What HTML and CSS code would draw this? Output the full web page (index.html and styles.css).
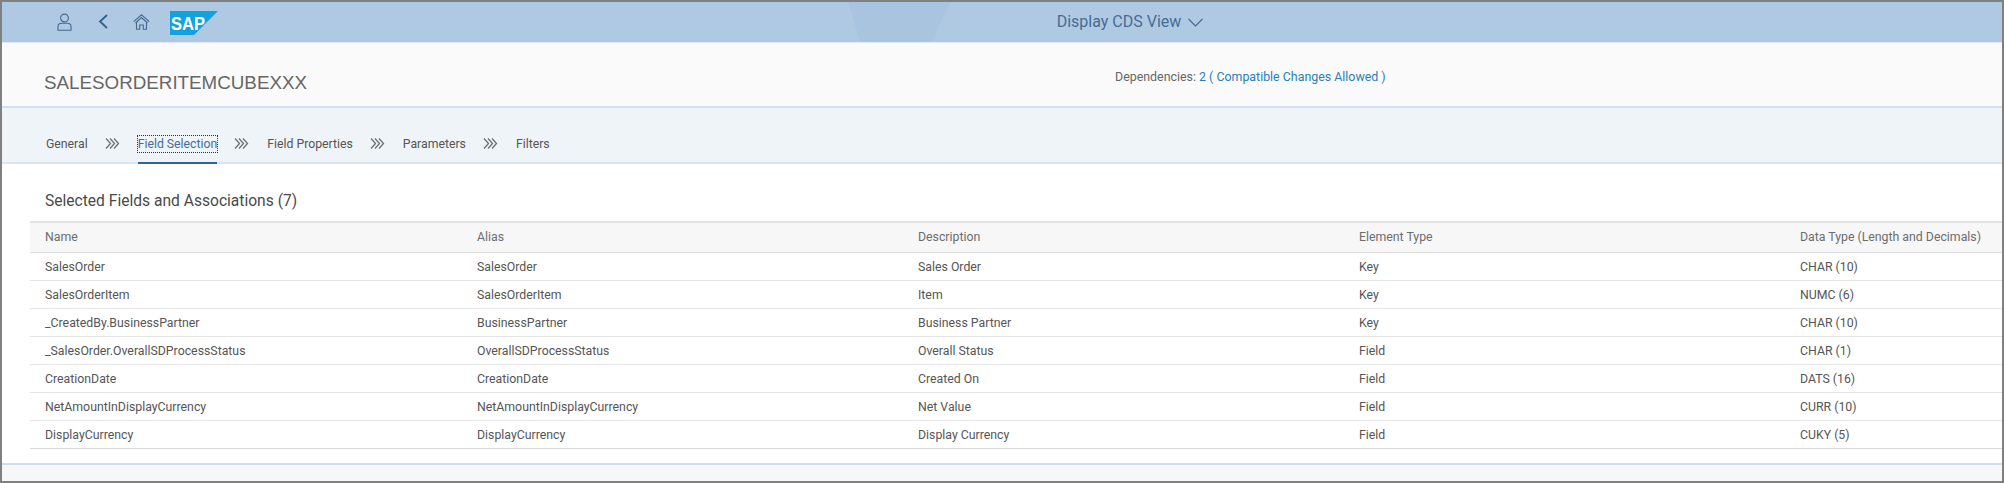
FILE: index.html
```html
<!DOCTYPE html>
<html>
<head>
  <title>Display CDS View</title>
  <link rel="stylesheet" href="styles.css">
</head>
<body>
  <div class="frame">
    <div class="shell">
      <div class="shell-shape"></div>
      <div class="shell-left">
        <svg class="icon-user" width="15" height="18" viewBox="0 0 15 18"><circle cx="7.500" cy="5" r="3.900"/><path d="M1 17.200v-3.400c0-2 1.500-3.600 3.500-3.600h6c2 0 3.500 1.600 3.500 3.600v3.400z"/></svg>
        <svg class="icon-back" width="11" height="15" viewBox="0 0 11 15"><path d="M9 1L2 7.500L9 14"/></svg>
        <svg class="icon-home" width="17" height="16" viewBox="0 0 17 16"><path d="M.7 7.600L8.500 .8l7.800 6.800"/><path d="M2.500 9L8.500 3.600L14.500 9"/><path d="M3.500 8.500v6.800h3.200v-4.300h3.600v4.300h3.200V8.500"/></svg>
        <svg class="logo" width="48" height="24" viewBox="0 0 48 24">
          <polygon points="0,0 48,0 24,24 0,24" fill="#12a3df"/>
          <text x="1" y="19" class="logo-text" textLength="34" lengthAdjust="spacingAndGlyphs">SAP</text>
        </svg>
      </div>
      <div class="shell-title">
        <span>Display CDS View</span>
        <svg width="15" height="9" viewBox="0 0 15 9"><path d="M.5 1l7 7l7-7"/></svg>
      </div>
    </div>

    <div class="objhead">
      <h1>SALESORDERITEMCUBEXXX</h1>
      <div class="deps">Dependencies: <a>2 ( Compatible Changes Allowed )</a></div>
    </div>

    <div class="nav">
      <a class="step">General</a>
      <svg class="chev" width="15" height="11" viewBox="0 0 15 11"><path d="M1 .5l4.500 5l-4.500 5M5 .5l4.500 5l-4.500 5M9 .5l4.500 5l-4.500 5"/></svg>
      <a class="step active"><span>Field Selection</span></a>
      <svg class="chev" width="15" height="11" viewBox="0 0 15 11"><path d="M1 .5l4.500 5l-4.500 5M5 .5l4.500 5l-4.500 5M9 .5l4.500 5l-4.500 5"/></svg>
      <a class="step">Field Properties</a>
      <svg class="chev" width="15" height="11" viewBox="0 0 15 11"><path d="M1 .5l4.500 5l-4.500 5M5 .5l4.500 5l-4.500 5M9 .5l4.500 5l-4.500 5"/></svg>
      <a class="step">Parameters</a>
      <svg class="chev" width="15" height="11" viewBox="0 0 15 11"><path d="M1 .5l4.500 5l-4.500 5M5 .5l4.500 5l-4.500 5M9 .5l4.500 5l-4.500 5"/></svg>
      <a class="step">Filters</a>
    </div>

    <div class="content">
      <h2>Selected Fields and Associations (7)</h2>
      <table class="fields">
        <colgroup>
          <col class="col-name"><col class="col-rest"><col class="col-rest"><col class="col-rest"><col>
        </colgroup>
        <thead>
          <tr><th>Name</th><th>Alias</th><th>Description</th><th>Element Type</th><th>Data Type (Length and Decimals)</th></tr>
        </thead>
        <tbody>
          <tr><td>SalesOrder</td><td>SalesOrder</td><td>Sales Order</td><td>Key</td><td>CHAR (10)</td></tr>
          <tr><td>SalesOrderItem</td><td>SalesOrderItem</td><td>Item</td><td>Key</td><td>NUMC (6)</td></tr>
          <tr><td>_CreatedBy.BusinessPartner</td><td>BusinessPartner</td><td>Business Partner</td><td>Key</td><td>CHAR (10)</td></tr>
          <tr><td>_SalesOrder.OverallSDProcessStatus</td><td>OverallSDProcessStatus</td><td>Overall Status</td><td>Field</td><td>CHAR (1)</td></tr>
          <tr><td>CreationDate</td><td>CreationDate</td><td>Created On</td><td>Field</td><td>DATS (16)</td></tr>
          <tr><td>NetAmountInDisplayCurrency</td><td>NetAmountInDisplayCurrency</td><td>Net Value</td><td>Field</td><td>CURR (10)</td></tr>
          <tr><td>DisplayCurrency</td><td>DisplayCurrency</td><td>Display Currency</td><td>Field</td><td>CUKY (5)</td></tr>
        </tbody>
      </table>
    </div>

    <div class="footer"></div>
  </div>
</body>
</html>
```

FILE: styles.css
```css
html, body {
  margin: 0;
  height: 100%;
}
body {
  font-family: Roboto, Arial, sans-serif;
  font-size: 12.300px;
  color: #555;
  overflow: hidden;
}
.frame {
  box-sizing: border-box;
  height: 483px;
  border: 2px solid #808080;
  display: flex;
  flex-direction: column;
  background: #fff;
}

/* shell bar */
.shell {
  position: relative;
  flex: none;
  height: 40px;
  border-bottom: 1px solid #dfe8f2;
  background: #b0c9e2;
}
.shell-shape {
  position: absolute;
  top: 0;
  bottom: 0;
  left: 846px;
  width: 102px;
  background: #a9c4df;
  clip-path: polygon(0 0, 100% 0, 82% 100%, 12% 100%);
}
.shell-left {
  position: absolute;
  top: 9px;
  left: 55px;
  display: flex;
  align-items: flex-start;
}
.shell svg path, .shell svg circle {
  fill: none;
  stroke: #41698f;
  stroke-width: 1.100;
}
.icon-user { margin-top: 2px; }
.icon-back { margin: 3px 0 0 26px; }
.shell .icon-back path { stroke-width: 1.800; stroke: #2f5f8b; }
.icon-home { margin: 3px 0 0 24px; }
.logo { margin-left: 20px; }
.logo-text {
  font-family: "Liberation Sans", Arial, sans-serif;
  font-size: 19px;
  font-weight: bold;
  fill: #fff;
}
.shell-title {
  position: relative;
  padding: 10px 0 0 256px;
  text-align: center;
  font-size: 16px;
  line-height: 20px;
  color: #466d92;
}
.shell-title svg { margin-left: 3px; }

/* object header */
.objhead {
  flex: none;
  height: 63px;
  display: flex;
  background: #fafafa;
  border-bottom: 2px solid #d3e0ee;
}
.objhead h1 {
  margin: 28px 0 0 42px;
  font-family: "Liberation Sans", Arial, sans-serif;
  font-size: 18.800px;
  font-weight: normal;
  line-height: 24px;
  color: #666;
}
.deps {
  margin: 25px 0 0 808px;
  font-size: 12.400px;
  line-height: 18px;
  color: #666;
}
.deps a { color: #2b7fb8; }

/* steps */
.nav {
  flex: none;
  height: 56px;
  box-sizing: border-box;
  display: flex;
  align-items: flex-end;
  padding-left: 44px;
  background: #eff4f9;
  border-bottom: 2px solid #d9e5f2;
  font-size: 12.250px;
}
.step {
  height: 28px;
  margin-bottom: -2px;
  line-height: 16px;
  white-space: nowrap;
}
.step.active {
  box-sizing: border-box;
  border-bottom: 2px solid #2f6497;
  color: #3f6f9f;
}
.step.active span {
  display: block;
  outline: 1px dotted #333;
}
.chev {
  flex: none;
  margin: 0 18px 13px 17px;
  fill: none;
  stroke: #6d7074;
  stroke-width: 1.300;
}

/* table */
.content {
  flex: 1;
  padding-left: 28px;
}
.content h2 {
  margin: 27px 0 10px 15px;
  font-size: 15.600px;
  font-weight: normal;
  line-height: 20px;
  color: #4a4a4a;
}
.fields {
  width: 100%;
  table-layout: fixed;
  border-collapse: collapse;
}
.col-name { width: 432px; }
.col-rest { width: 441px; }
.fields th, .fields td {
  height: 28.140px;
  box-sizing: border-box;
  padding: 0 0 0 15px;
  text-align: left;
  font-weight: normal;
  white-space: nowrap;
  border-bottom: 1px solid #e5e5e5;
}
.fields td { padding-top: 1px; }
.fields th {
  height: 30px;
  color: #6a6d70;
  background: #f7f7f7;
  border-top: 2px solid #e3e3e3;
  border-bottom: 1px solid #dcdcdc;
}
.fields tbody tr:last-child td { border-bottom-color: #d9d9d9; }

.footer {
  flex: none;
  height: 16px;
  background: #f7f7f7;
  border-top: 2px solid #cfdeee;
}
```
